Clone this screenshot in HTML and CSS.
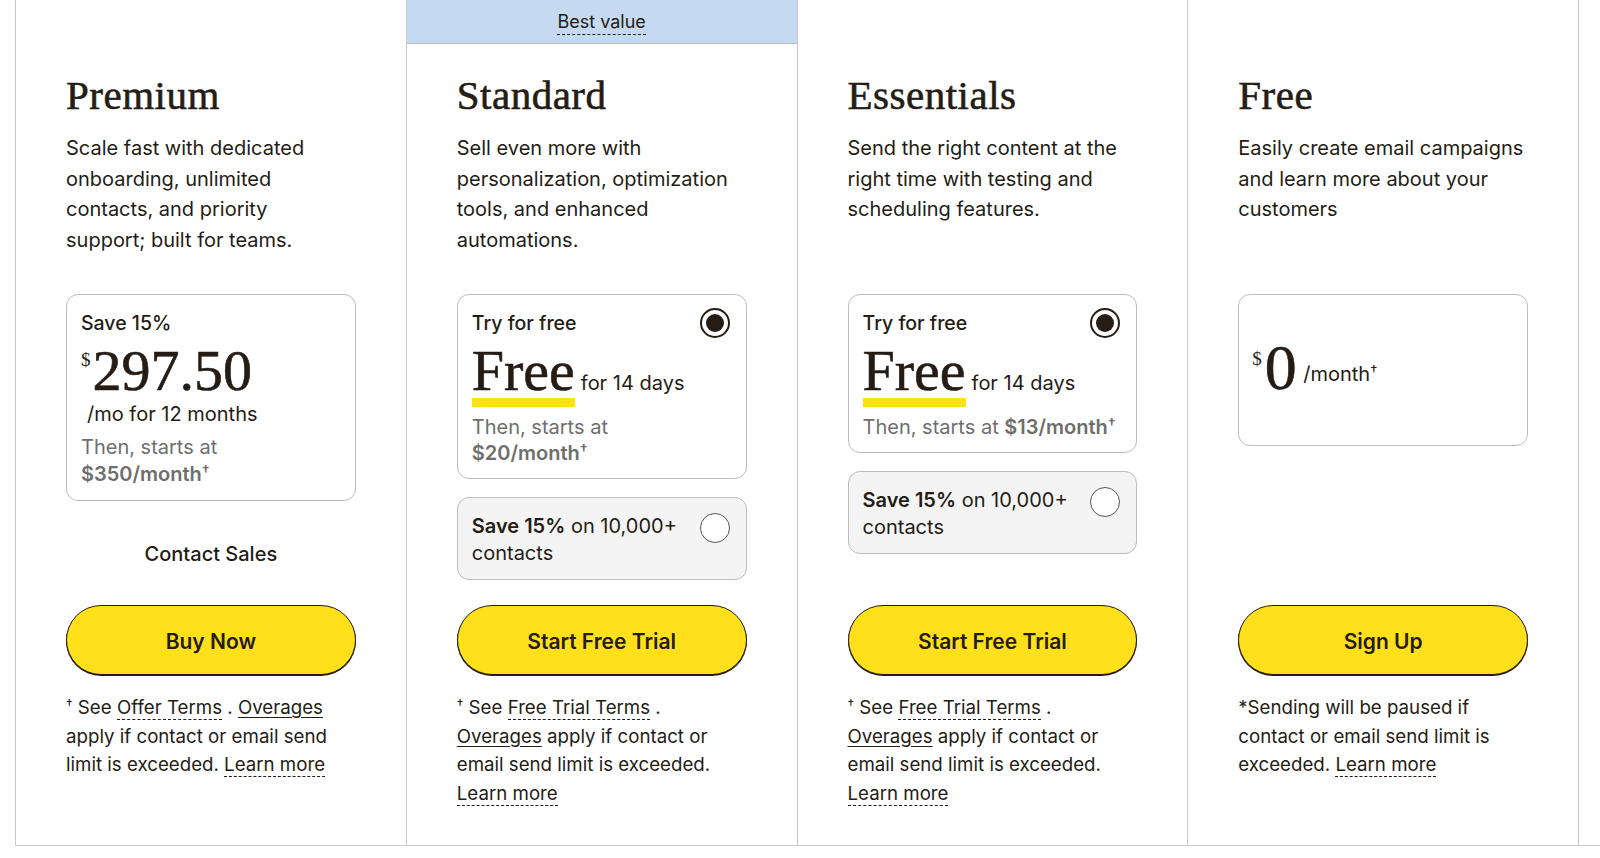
FILE: index.html
```html
<!DOCTYPE html>
<html lang="en">
<head>
<meta charset="utf-8">
<title>Pricing plans</title>
<link rel="stylesheet" href="styles.css">
</head>
<body>
<div class="plans">
  <section class="plan">
    <div class="plan-flag"></div>
    <div class="plan-body">
      <h2 class="plan-name">Premium</h2>
      <p class="plan-desc">Scale fast with dedicated<br>onboarding, unlimited<br>contacts, and priority<br>support; built for teams.</p>
      <div class="plan-options">
        <div class="card">
          <div class="card-label">Save 15%</div>
          <div class="price"><span class="currency">$</span>297.50</div>
          <div class="price-term">/mo for 12 months</div>
          <div class="then">Then, starts at<br><strong>$350/month<span class="dag">†</span></strong></div>
        </div>
        <div class="contact">Contact Sales</div>
      </div>
      <a class="cta" href="#">Buy Now</a>
      <p class="fine"><span class="dag">†</span> See <a class="dash" href="#">Offer Terms</a> . <a class="solid" href="#">Overages</a><br>apply if contact or email send<br>limit is exceeded. <a class="dash" href="#">Learn more</a></p>
    </div>
  </section>

  <section class="plan">
    <div class="plan-flag plan-flag--on"><span class="dash">Best value</span></div>
    <div class="plan-body">
      <h2 class="plan-name">Standard</h2>
      <p class="plan-desc">Sell even more with<br>personalization, optimization<br>tools, and enhanced<br>automations.</p>
      <div class="plan-options">
        <div class="card">
          <div class="card-head"><span class="card-label">Try for free</span><span class="radio radio--on"></span></div>
          <div class="free-row"><span class="free-word">Free</span><span class="free-days">for 14 days</span></div>
          <div class="then then--tight">Then, starts at<br><strong>$20/month<span class="dag">†</span></strong></div>
        </div>
        <div class="card card--alt">
          <div class="alt-text"><strong>Save 15%</strong> on 10,000+<br>contacts</div>
          <span class="radio"></span>
        </div>
      </div>
      <a class="cta" href="#">Start Free Trial</a>
      <p class="fine"><span class="dag">†</span> See <a class="dash" href="#">Free Trial Terms</a> .<br><a class="solid" href="#">Overages</a> apply if contact or<br>email send limit is exceeded.<br><a class="dash" href="#">Learn more</a></p>
    </div>
  </section>

  <section class="plan">
    <div class="plan-flag"></div>
    <div class="plan-body">
      <h2 class="plan-name">Essentials</h2>
      <p class="plan-desc">Send the right content at the<br>right time with testing and<br>scheduling features.</p>
      <div class="plan-options">
        <div class="card">
          <div class="card-head"><span class="card-label">Try for free</span><span class="radio radio--on"></span></div>
          <div class="free-row"><span class="free-word">Free</span><span class="free-days">for 14 days</span></div>
          <div class="then then--tight">Then, starts at <strong>$13/month<span class="dag">†</span></strong></div>
        </div>
        <div class="card card--alt">
          <div class="alt-text"><strong>Save 15%</strong> on 10,000+<br>contacts</div>
          <span class="radio"></span>
        </div>
      </div>
      <a class="cta" href="#">Start Free Trial</a>
      <p class="fine"><span class="dag">†</span> See <a class="dash" href="#">Free Trial Terms</a> .<br><a class="solid" href="#">Overages</a> apply if contact or<br>email send limit is exceeded.<br><a class="dash" href="#">Learn more</a></p>
    </div>
  </section>

  <section class="plan">
    <div class="plan-flag"></div>
    <div class="plan-body">
      <h2 class="plan-name">Free</h2>
      <p class="plan-desc">Easily create email campaigns<br>and learn more about your<br>customers</p>
      <div class="plan-options">
        <div class="card card--zero">
          <div class="zero-row"><span class="currency">$</span><span class="zero">0</span> <span class="zero-term">/month<span class="dag">†</span></span></div>
        </div>
      </div>
      <a class="cta" href="#">Sign Up</a>
      <p class="fine">*Sending will be paused if<br>contact or email send limit is<br>exceeded. <a class="dash" href="#">Learn more</a></p>
    </div>
  </section>
</div>
</body>
</html>
```

FILE: styles.css
```css
* { box-sizing: border-box; }

html, body {
  margin: 0;
  padding: 0;
  background: #ffffff;
}

body {
  font-family: Inter, "Liberation Sans", Arial, sans-serif;
  color: #241c15;
}

.plans {
  display: grid;
  grid-template-columns: repeat(4, 390.75px);
  margin-left: 15px;
  border-left: 1px solid #c9c9c9;
  border-bottom: 1px solid #c9c9c9;
  height: 846px;
}

.plan {
  border-right: 1px solid #c9c9c9;
  display: flex;
  flex-direction: column;
}

.plan-flag {
  height: 44px;
  display: flex;
  align-items: center;
  justify-content: center;
  font-size: 18px;
  line-height: 24px;
}

.plan-flag--on {
  background: #c5daf1;
  border-bottom: 1px solid #bdbdbd;
  padding-top: 1px;
}

.plan-body {
  padding: 0 50px;
  display: flex;
  flex-direction: column;
}

.plan-name {
  margin: 27px 0 0;
  font-family: "Liberation Serif", "Times New Roman", serif;
  font-weight: 400;
  font-size: 41px;
  line-height: 48px;
  letter-spacing: 0.5px;
  -webkit-text-stroke: 0.6px #241c15;
  color: #241c15;
}

.plan-desc {
  margin: 14px 0 39px;
  height: 122px;
  font-size: 20px;
  line-height: 30.5px;
  white-space: nowrap;
}

.plan-options {
  height: 311px;
  display: flex;
  flex-direction: column;
}

.card {
  border: 1px solid #bcbcbc;
  border-radius: 12px;
  padding: 15px 16px 12px 14px;
  background: #ffffff;
}

.card-label {
  font-size: 19.5px;
  line-height: 26px;
  font-weight: 500;
}

.card-head {
  display: flex;
  justify-content: space-between;
  align-items: center;
  height: 26px;
}

.price {
  font-family: "Liberation Serif", "Times New Roman", serif;
  font-size: 58px;
  line-height: 60px;
  margin-top: 5px;
  -webkit-text-stroke: 0.6px #241c15;
}

.currency {
  font-family: "Liberation Serif", "Times New Roman", serif;
  font-size: 19px;
  vertical-align: 24px;
  line-height: 0;
  margin-right: 2px;
  -webkit-text-stroke: 0;
}

.price-term {
  font-size: 20px;
  line-height: 26px;
  padding-left: 6px;
}

.then {
  margin-top: 7px;
  font-size: 20px;
  line-height: 27px;
  color: #6e6e6e;
}

.then strong {
  font-weight: 600;
}

.then--tight {
  margin-top: 6px;
  line-height: 26px;
}

.dag {
  font-size: 0.72em;
  vertical-align: 0.38em;
  line-height: 0;
}

.contact {
  margin-top: 40px;
  text-align: center;
  font-size: 20px;
  line-height: 26px;
  font-weight: 500;
}

.radio {
  flex: none;
  width: 30px;
  height: 30px;
  border-radius: 50%;
  border: 1px solid #555555;
  background: #ffffff;
  display: flex;
  align-items: center;
  justify-content: center;
}

.radio--on {
  border: 2px solid #241c15;
  margin: -2px 0;
}

.radio--on::after {
  content: "";
  width: 18px;
  height: 18px;
  border-radius: 50%;
  background: #241c15;
}

.free-row {
  display: flex;
  align-items: baseline;
  gap: 6px;
  margin-top: 7px;
}

.free-word {
  display: inline-block;
  font-family: "Liberation Serif", "Times New Roman", serif;
  font-size: 58px;
  line-height: 55px;
  border-bottom: 9px solid #ffe01b;
  -webkit-text-stroke: 0.6px #241c15;
}

.free-days {
  font-size: 20px;
  line-height: 26px;
}

.then--tight {
  margin-top: 7px;
}

.card--alt {
  margin-top: 18px;
  background: #f4f4f4;
  display: flex;
  justify-content: space-between;
  align-items: flex-start;
  padding: 15px 16px 12px 14px;
}

.alt-text {
  font-size: 20px;
  line-height: 27px;
}

.alt-text strong {
  font-weight: 600;
}

.card--zero {
  height: 152px;
  padding: 43px 14px 0 13px;
}

.zero-row {
  line-height: 60px;
  white-space: nowrap;
}

.zero {
  font-family: "Liberation Serif", "Times New Roman", serif;
  font-size: 64px;
  line-height: 60px;
  margin-left: 1px;
  -webkit-text-stroke: 0.6px #241c15;
}

.zero-term {
  font-size: 20px;
  margin-left: 2px;
  vertical-align: 8px;
}

.cta {
  display: flex;
  align-items: center;
  justify-content: center;
  height: 70px;
  border: 1px solid #241c15;
  border-radius: 35px;
  background: #ffe01b;
  box-shadow: 0 1px 0 #241c15;
  color: #241c15;
  text-decoration: none;
  font-size: 21px;
  font-weight: 600;
  padding-top: 2px;
}

.fine {
  margin: 19px 0 0;
  font-size: 18.7px;
  line-height: 28.5px;
  white-space: nowrap;
}

.fine a {
  color: #241c15;
  text-decoration: none;
}

.dash {
  border-bottom: 1px dashed #241c15;
}

.fine .solid {
  text-decoration: underline;
  text-underline-offset: 3px;
}
```
